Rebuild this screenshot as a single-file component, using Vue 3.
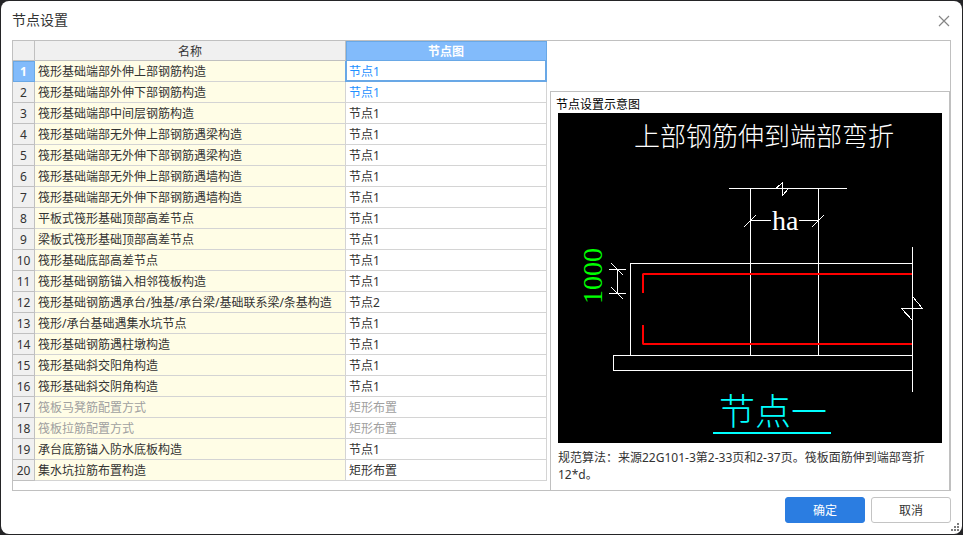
<script setup>
import { ref } from 'vue'

const rows = ref([
  { name: '筏形基础端部外伸上部钢筋构造', node: '节点1', changed: true },
  { name: '筏形基础端部外伸下部钢筋构造', node: '节点1', changed: true },
  { name: '筏形基础端部中间层钢筋构造', node: '节点1' },
  { name: '筏形基础端部无外伸上部钢筋遇梁构造', node: '节点1' },
  { name: '筏形基础端部无外伸下部钢筋遇梁构造', node: '节点1' },
  { name: '筏形基础端部无外伸上部钢筋遇墙构造', node: '节点1' },
  { name: '筏形基础端部无外伸下部钢筋遇墙构造', node: '节点1' },
  { name: '平板式筏形基础顶部高差节点', node: '节点1' },
  { name: '梁板式筏形基础顶部高差节点', node: '节点1' },
  { name: '筏形基础底部高差节点', node: '节点1' },
  { name: '筏形基础钢筋锚入相邻筏板构造', node: '节点1' },
  { name: '筏形基础钢筋遇承台/独基/承台梁/基础联系梁/条基构造', node: '节点2' },
  { name: '筏形/承台基础遇集水坑节点', node: '节点1' },
  { name: '筏形基础钢筋遇柱墩构造', node: '节点1' },
  { name: '筏形基础斜交阳角构造', node: '节点1' },
  { name: '筏形基础斜交阴角构造', node: '节点1' },
  { name: '筏板马凳筋配置方式', node: '矩形布置', disabled: true },
  { name: '筏板拉筋配置方式', node: '矩形布置', disabled: true },
  { name: '承台底筋锚入防水底板构造', node: '节点1' },
  { name: '集水坑拉筋布置构造', node: '矩形布置' },
])
const selected = ref(0)

function select(index) {
  if (!rows.value[index].disabled) selected.value = index
}
</script>

<template>
  <div class="backdrop">
    <main class="dialog">
      <header class="titlebar">
        <h1>节点设置</h1>
        <button class="close" type="button" aria-label="关闭">
          <svg width="12" height="12" viewBox="0 0 12 12" aria-hidden="true">
            <path d="M1 1L11 11M11 1L1 11" fill="none" stroke="#858585" stroke-width="1.2" />
          </svg>
        </button>
      </header>

      <div class="frame">
        <table class="grid">
          <colgroup>
            <col class="col-index" />
            <col />
            <col class="col-node" />
          </colgroup>
          <thead>
            <tr>
              <th class="corner"></th>
              <th scope="col">名称</th>
              <th scope="col" class="active">节点图</th>
            </tr>
          </thead>
          <tbody>
            <tr
              v-for="(row, i) in rows"
              :key="row.name"
              :class="{ disabled: row.disabled }"
              @click="select(i)"
            >
              <th scope="row" :class="{ active: i === selected }">{{ i + 1 }}</th>
              <td class="name">{{ row.name }}</td>
              <td class="node" :class="{ changed: row.changed, selected: i === selected }">{{ row.node }}</td>
            </tr>
          </tbody>
        </table>

        <section class="preview">
          <h2>节点设置示意图</h2>
          <svg class="drawing" viewBox="0 0 384 330" role="img" aria-label="节点设置示意图">
            <rect width="384" height="330" fill="#000" />
            <g fill="none" stroke="#fff" stroke-width="1" shape-rendering="crispEdges">
              <!-- column with break line -->
              <path d="M171 75.5H289M192.5 75.5V242.5M260.5 75.5V242.5" />
              <path d="M218 75.5L224.5 69.5V82.5L230.5 75.5" />
              <!-- column width dimension -->
              <path d="M192.5 107.5H213M241 107.5H260.5" />
              <path d="M186 114L198 102M254 114L266 102" />
              <!-- slab and bedding -->
              <path d="M354.5 150.5H72.5V242.5M354.5 242.5H55.5V257.5H354.5" />
              <path d="M354.5 134V279" />
              <path d="M354.5 183.5L364.5 195.5H343.5L354.5 207.5" />
              <!-- hook length dimension -->
              <path d="M51 156.5H68M51 180.5H68M59.5 156.5V180.5" />
              <path d="M53.5 150.5L65.5 162.5M53.5 174.5L65.5 186.5" />
            </g>
            <g fill="none" stroke="#f00" stroke-width="2" stroke-linejoin="bevel">
              <path d="M354 161H85V180" />
              <path d="M354 231H85V212" />
            </g>
            <text class="cad-title" x="76" y="33">上部钢筋伸到端部弯折</text>
            <text class="cad-dim" x="214" y="117">ha</text>
            <text class="cad-dim length" transform="translate(44 191) rotate(-90)">1000</text>
            <text class="cad-node" x="161" y="312">节点一</text>
            <path d="M155 320H273" stroke="#0ff" stroke-width="2" />
          </svg>
          <p>规范算法：来源22G101-3第2-33页和2-37页。筏板面筋伸到端部弯折12*d。</p>
        </section>
      </div>

      <footer class="actions">
        <button class="btn primary" type="button">确定</button>
        <button class="btn" type="button">取消</button>
      </footer>

      <svg class="grip" width="8" height="8" viewBox="0 0 8 8" aria-hidden="true">
        <path
          d="M6 0h2v2h-2zM3 3h2v2h-2zM6 3h2v2h-2zM0 6h2v2h-2zM3 6h2v2h-2zM6 6h2v2h-2z"
          fill="#7c7c7c"
        />
      </svg>
    </main>
  </div>
</template>

<style>
body {
  background: #242426;
}
</style>

<style scoped>
* {
  box-sizing: border-box;
}

.backdrop {
  display: flex;
  min-height: 100vh;
  padding: 1px;
  font-family: "Noto Sans", "Noto Sans CJK SC", sans-serif;
  font-size: 12px;
  color: #333;
}

.dialog {
  position: relative;
  flex: 1;
  min-width: 0;
  padding: 0 11px 10px;
  background: #fff;
  border-radius: 8px;
}

.titlebar {
  display: flex;
  align-items: center;
  justify-content: space-between;
  height: 39px;
}

h1 {
  margin: 0;
  padding-bottom: 2px;
  font-size: 14px;
  font-weight: 400;
  line-height: 20px;
}

.close {
  display: flex;
  padding: 1px;
  border: 0;
  background: none;
}

.frame {
  display: flex;
  align-items: flex-start;
  gap: 3px;
  border: 1px solid #c0c0c0;
}

.grid {
  flex: none;
  width: 534px;
  table-layout: fixed;
  border-collapse: separate;
  border-spacing: 0;
  line-height: 18px;
}

.col-index {
  width: 22px;
}

.col-node {
  width: 201px;
}

.grid th,
.grid td {
  padding: 2px 3px 0;
  border: 0 solid #d4d4d4;
  border-width: 0 1px 1px 0;
  overflow: hidden;
  white-space: nowrap;
  text-align: left;
}

.grid th {
  padding: 2px 0 0;
  border-color: #c0c0c0;
  background: #f0f0f0;
  font-weight: 400;
  text-align: center;
}

.grid thead th {
  height: 20px;
  line-height: 17px;
}

.grid th.active {
  border-color: #69a8e6;
  background: #82bbfb;
  box-shadow: inset 1px 1px #69a8e6;
  color: #fff;
  font-weight: 700;
}

.grid .name {
  background: #fffde6;
}

.grid .changed {
  color: #1e90ff;
}

.grid .selected {
  border-color: #69a8e6;
  box-shadow: -1px 0 #69a8e6, inset 1px 0 #69a8e6, inset -1px -1px #69a8e6;
}

.grid .disabled td {
  color: #a0a0a0;
}

.preview {
  flex: 1;
  min-width: 0;
  margin-top: 50px;
  padding: 0 7px 7px;
  border: 1px solid #c0c0c0;
  border-bottom: 0;
}

h2 {
  margin: 0 -2px;
  padding-top: 4px;
  color: #000;
  font-size: 12px;
  font-weight: 400;
  line-height: 17px;
}

.drawing {
  display: block;
  width: 100%;
}

.cad-title,
.cad-node {
  font-family: "Noto Sans CJK SC", sans-serif;
  font-weight: 300;
}

.cad-title {
  fill: #fff;
  font-size: 26px;
}

.cad-node {
  fill: #0ff;
  font-size: 36px;
}

.cad-dim {
  fill: #fff;
  font-family: "Liberation Serif", serif;
  font-size: 28px;
}

.cad-dim.length {
  fill: #0f0;
}

.preview p {
  margin: 6px 0 0;
  line-height: 17px;
}

.actions {
  display: flex;
  justify-content: flex-end;
  gap: 6px;
  margin-top: 6px;
}

.btn {
  width: 80px;
  height: 26px;
  padding: 2px 0 0;
  border: 1px solid #c4c4c4;
  border-radius: 3px;
  background: #fff;
  color: #333;
  font: inherit;
  line-height: 22px;
}

.btn.primary {
  border-color: #2b7de1;
  background: #2b7de1;
  color: #fff;
}

.grip {
  position: absolute;
  right: 3px;
  bottom: 3px;
}
</style>
